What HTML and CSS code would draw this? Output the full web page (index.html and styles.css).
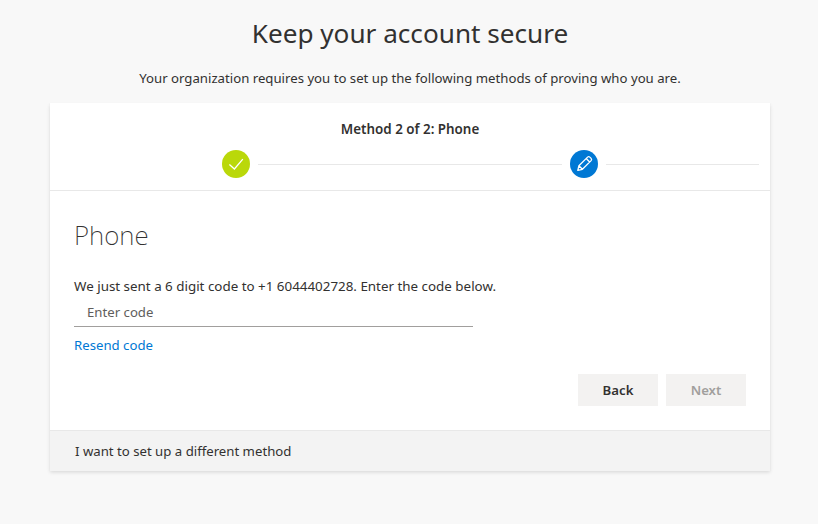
FILE: index.html
```html
<!DOCTYPE html>
<html lang="en">
<head>
<meta charset="utf-8">
<title>Keep your account secure</title>
<link rel="stylesheet" href="styles.css">
</head>
<body>
<main class="page">
  <h1 class="title">Keep your account secure</h1>
  <p class="subtitle">Your organization requires you to set up the following methods of proving who you are.</p>
  <section class="card">
    <header class="wizard">
      <div class="wizard-title">Method 2 of 2: Phone</div>
      <div class="steps">
        <span class="step step-done">
          <svg viewBox="0 0 28 28" width="28" height="28"><path d="M7.4 14.4L12.400 19 20.800 9.200" fill="none" stroke="#fff" stroke-width="1.300"/></svg>
        </span>
        <span class="line line-main"></span>
        <span class="step step-current">
          <svg viewBox="0 0 28 28" width="28" height="28"><path d="M7.8 20.4l1.100-4.700L17.600 7.100a1.600 1.600 0 0 1 2.200 0l1.300 1.300a1.600 1.600 0 0 1 0 2.200L12.400 19.300zM8.900 15.700l3.500 3.600M16.200 8.500l3.500 3.500" fill="none" stroke="#fff" stroke-width="1.300" stroke-linejoin="round"/></svg>
        </span>
        <span class="line line-end"></span>
      </div>
    </header>
    <div class="content">
      <h2 class="method">Phone</h2>
      <p class="message">We just sent a 6 digit code to +1 6044402728. Enter the code below.</p>
      <input class="code" type="text" placeholder="Enter code" aria-label="Enter code">
      <a class="resend" href="#">Resend code</a>
      <div class="actions">
        <button class="btn" type="button">Back</button>
        <button class="btn btn-disabled" type="button" disabled>Next</button>
      </div>
    </div>
    <footer class="alt">I want to set up a different method</footer>
  </section>
</main>
</body>
</html>
```
FILE: styles.css
```css
* { box-sizing: border-box; }
html, body { margin: 0; height: 100%; }
body {
  background: #f8f8f8;
  color: #323130;
  font-family: "Noto Sans", "Open Sans", sans-serif;
  font-size: 13.2px;
}
.page {
  display: flex;
  flex-direction: column;
  align-items: center;
  padding: 13px 0 0 2px;
}
.title {
  margin: 0;
  font-size: 26.15px;
  line-height: 40px;
  font-weight: 400;
}
.subtitle {
  margin: 16px 0 0;
  line-height: 18px;
  font-size: 13.2px;
}
.card {
  width: 720px;
  margin-top: 16px;
  background: #fff;
  box-shadow: 0 1.6px 3.6px rgba(0,0,0,.13), 0 .3px .9px rgba(0,0,0,.11);
}
.wizard {
  height: 88px;
  padding-top: 17px;
  border-bottom: 1px solid #e8e8e8;
}
.wizard-title {
  text-align: center;
  font-weight: 600;
  font-size: 13.4px;
  line-height: 18px;
}
.steps {
  display: flex;
  align-items: center;
  margin-top: 12px;
  padding: 0 11px 0 172px;
}
.step {
  flex: none;
  width: 28px;
  height: 28px;
  border-radius: 50%;
  display: block;
}
.step svg { display: block; }
.step-done { background: #bad80a; }
.step-current { background: #0078d4; }
.line {
  height: 1px;
  background: #e8e8e8;
}
.line-main { flex: 1; margin: 0 8px; }
.line-end { flex: none; width: 153px; margin-left: 8px; }
.content {
  height: 239px;
  padding: 26px 24px 0;
  display: flex;
  flex-direction: column;
  align-items: flex-start;
}
.method {
  margin: 0;
  font-size: 26px;
  font-weight: 200;
  line-height: 36px;
}
.message {
  margin: 24px 0 0;
  line-height: 18px;
  font-size: 13.38px;
}
.code {
  width: 399px;
  height: 31px;
  margin-top: 1px;
  padding: 2px 13px 0;
  border: 0;
  border-bottom: 1px solid #a19f9d;
  background: transparent;
  font: inherit;
  outline: none;
}
.code::placeholder { color: #605e5c; opacity: 1; }
.resend {
  margin-top: 9px;
  line-height: 18px;
  color: #0078d4;
  text-decoration: none;
}
.actions {
  align-self: flex-end;
  display: flex;
  gap: 8px;
  margin-top: 20px;
}
.btn {
  width: 80px;
  height: 32px;
  border: 0;
  padding: 0;
  background: #f3f2f1;
  color: #323130;
  font: inherit;
  font-weight: 600;
}
.btn-disabled { color: #a19f9d; }
.alt {
  height: 41px;
  padding: 0 25px;
  display: flex;
  align-items: center;
  background: #f3f3f3;
  border-top: 1px solid #e8e8e8;
}
```
